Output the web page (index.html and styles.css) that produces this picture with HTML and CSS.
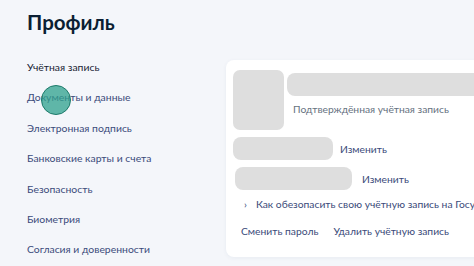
FILE: index.html
```html
<!DOCTYPE html>
<html>
<head>
  <title>Профиль</title>
  <link rel="stylesheet" href="styles.css">
</head>
<body>
  <div class="page">
    <div class="sidebar">
      <h1 class="title">Профиль</h1>
      <ul class="menu">
        <li class="active">Учётная запись</li>
        <li class="docs">Документы и данные<span class="touch"></span></li>
        <li>Электронная подпись</li>
        <li>Банковские карты и счета</li>
        <li>Безопасность</li>
        <li>Биометрия</li>
        <li>Согласия и доверенности</li>
      </ul>
    </div>

    <div class="main">
      <div class="card">
        <div class="head">
          <div class="avatar"></div>
          <div class="who">
            <div class="bar name"></div>
            <div class="status">Подтверждённая учётная запись</div>
          </div>
        </div>
        <div class="row">
          <div class="bar phone"></div>
          <a class="link">Изменить</a>
        </div>
        <div class="row">
          <div class="bar mail"></div>
          <a class="link">Изменить</a>
        </div>
        <div class="tip"><span class="chev">›</span>Как обезопасить свою учётную запись на Госуслугах</div>
        <div class="actions">
          <a class="link">Сменить пароль</a>
          <a class="link">Удалить учётную запись</a>
        </div>
      </div>
    </div>
  </div>
</body>
</html>
```

FILE: styles.css
```css
/* Whole page */
body {
  margin: 0;
  font-family: Lato, "Noto Sans", sans-serif;
  background-color: #f4f6fa;
  color: #0b1f33;
  overflow: hidden;
}

.page {
  display: flex;
  width: 474px;
  height: 266px;
  overflow: hidden;
}

/* Left column */
.sidebar {
  width: 199px;
  flex: none;
  padding-left: 27px;
}

.title {
  margin: 9px 0 0;
  font-size: 20.5px;
  font-weight: 700;
  line-height: 26px;
  color: #0b1f33;
}

.menu {
  list-style-type: none;
  margin: 26px 0 0;
  padding: 0;
}

.menu li {
  font-size: 10.4px;
  line-height: 13px;
  height: 30.4px;
  color: #3b4b7a;
}

.menu li.active {
  color: #1a2535;
}

.menu li.docs {
  position: relative;
}

/* Tap marker from the screen recording */
.touch {
  position: absolute;
  left: 14px;
  top: -6px;
  width: 28px;
  height: 28px;
  border-radius: 50%;
  background-color: rgba(45, 160, 140, 0.75);
  border: 1.5px solid #1d7a6a;
}

/* Right column */
.main {
  flex: none;
  padding-top: 60px;
}

.card {
  width: 300px;
  height: 187px;
  padding: 10px 7px 0;
  background-color: #fff;
  border-radius: 8px;
  box-shadow: 0 1px 4px rgba(40, 60, 100, 0.06);
  overflow: hidden;
}

.head {
  display: flex;
  gap: 3px;
}

.avatar {
  width: 51px;
  height: 60px;
  border-radius: 7px;
  background-color: #dedede;
}

.who {
  flex: 1;
  padding-top: 3px;
}

.bar {
  background-color: #dedede;
  border-radius: 8px;
  height: 23px;
}

.name {
  width: 200px;
}

.status {
  margin: 7px 0 0 6px;
  font-size: 10.3px;
  color: #66727f;
}

.row {
  display: flex;
  align-items: center;
  gap: 7px;
  margin-top: 7px;
}

.phone {
  width: 100px;
}

.mail {
  width: 117px;
  margin-left: 2px;
  margin-right: 3px;
}

.link {
  font-size: 10.3px;
  color: #3b4b7a;
}

.tip {
  margin: 8px 0 0 11px;
  font-size: 10.3px;
  color: #3b4b7a;
  white-space: nowrap;
}

.chev {
  margin-right: 9px;
}

.actions {
  display: flex;
  gap: 15px;
  margin: 15px 0 0 8px;
}
```
